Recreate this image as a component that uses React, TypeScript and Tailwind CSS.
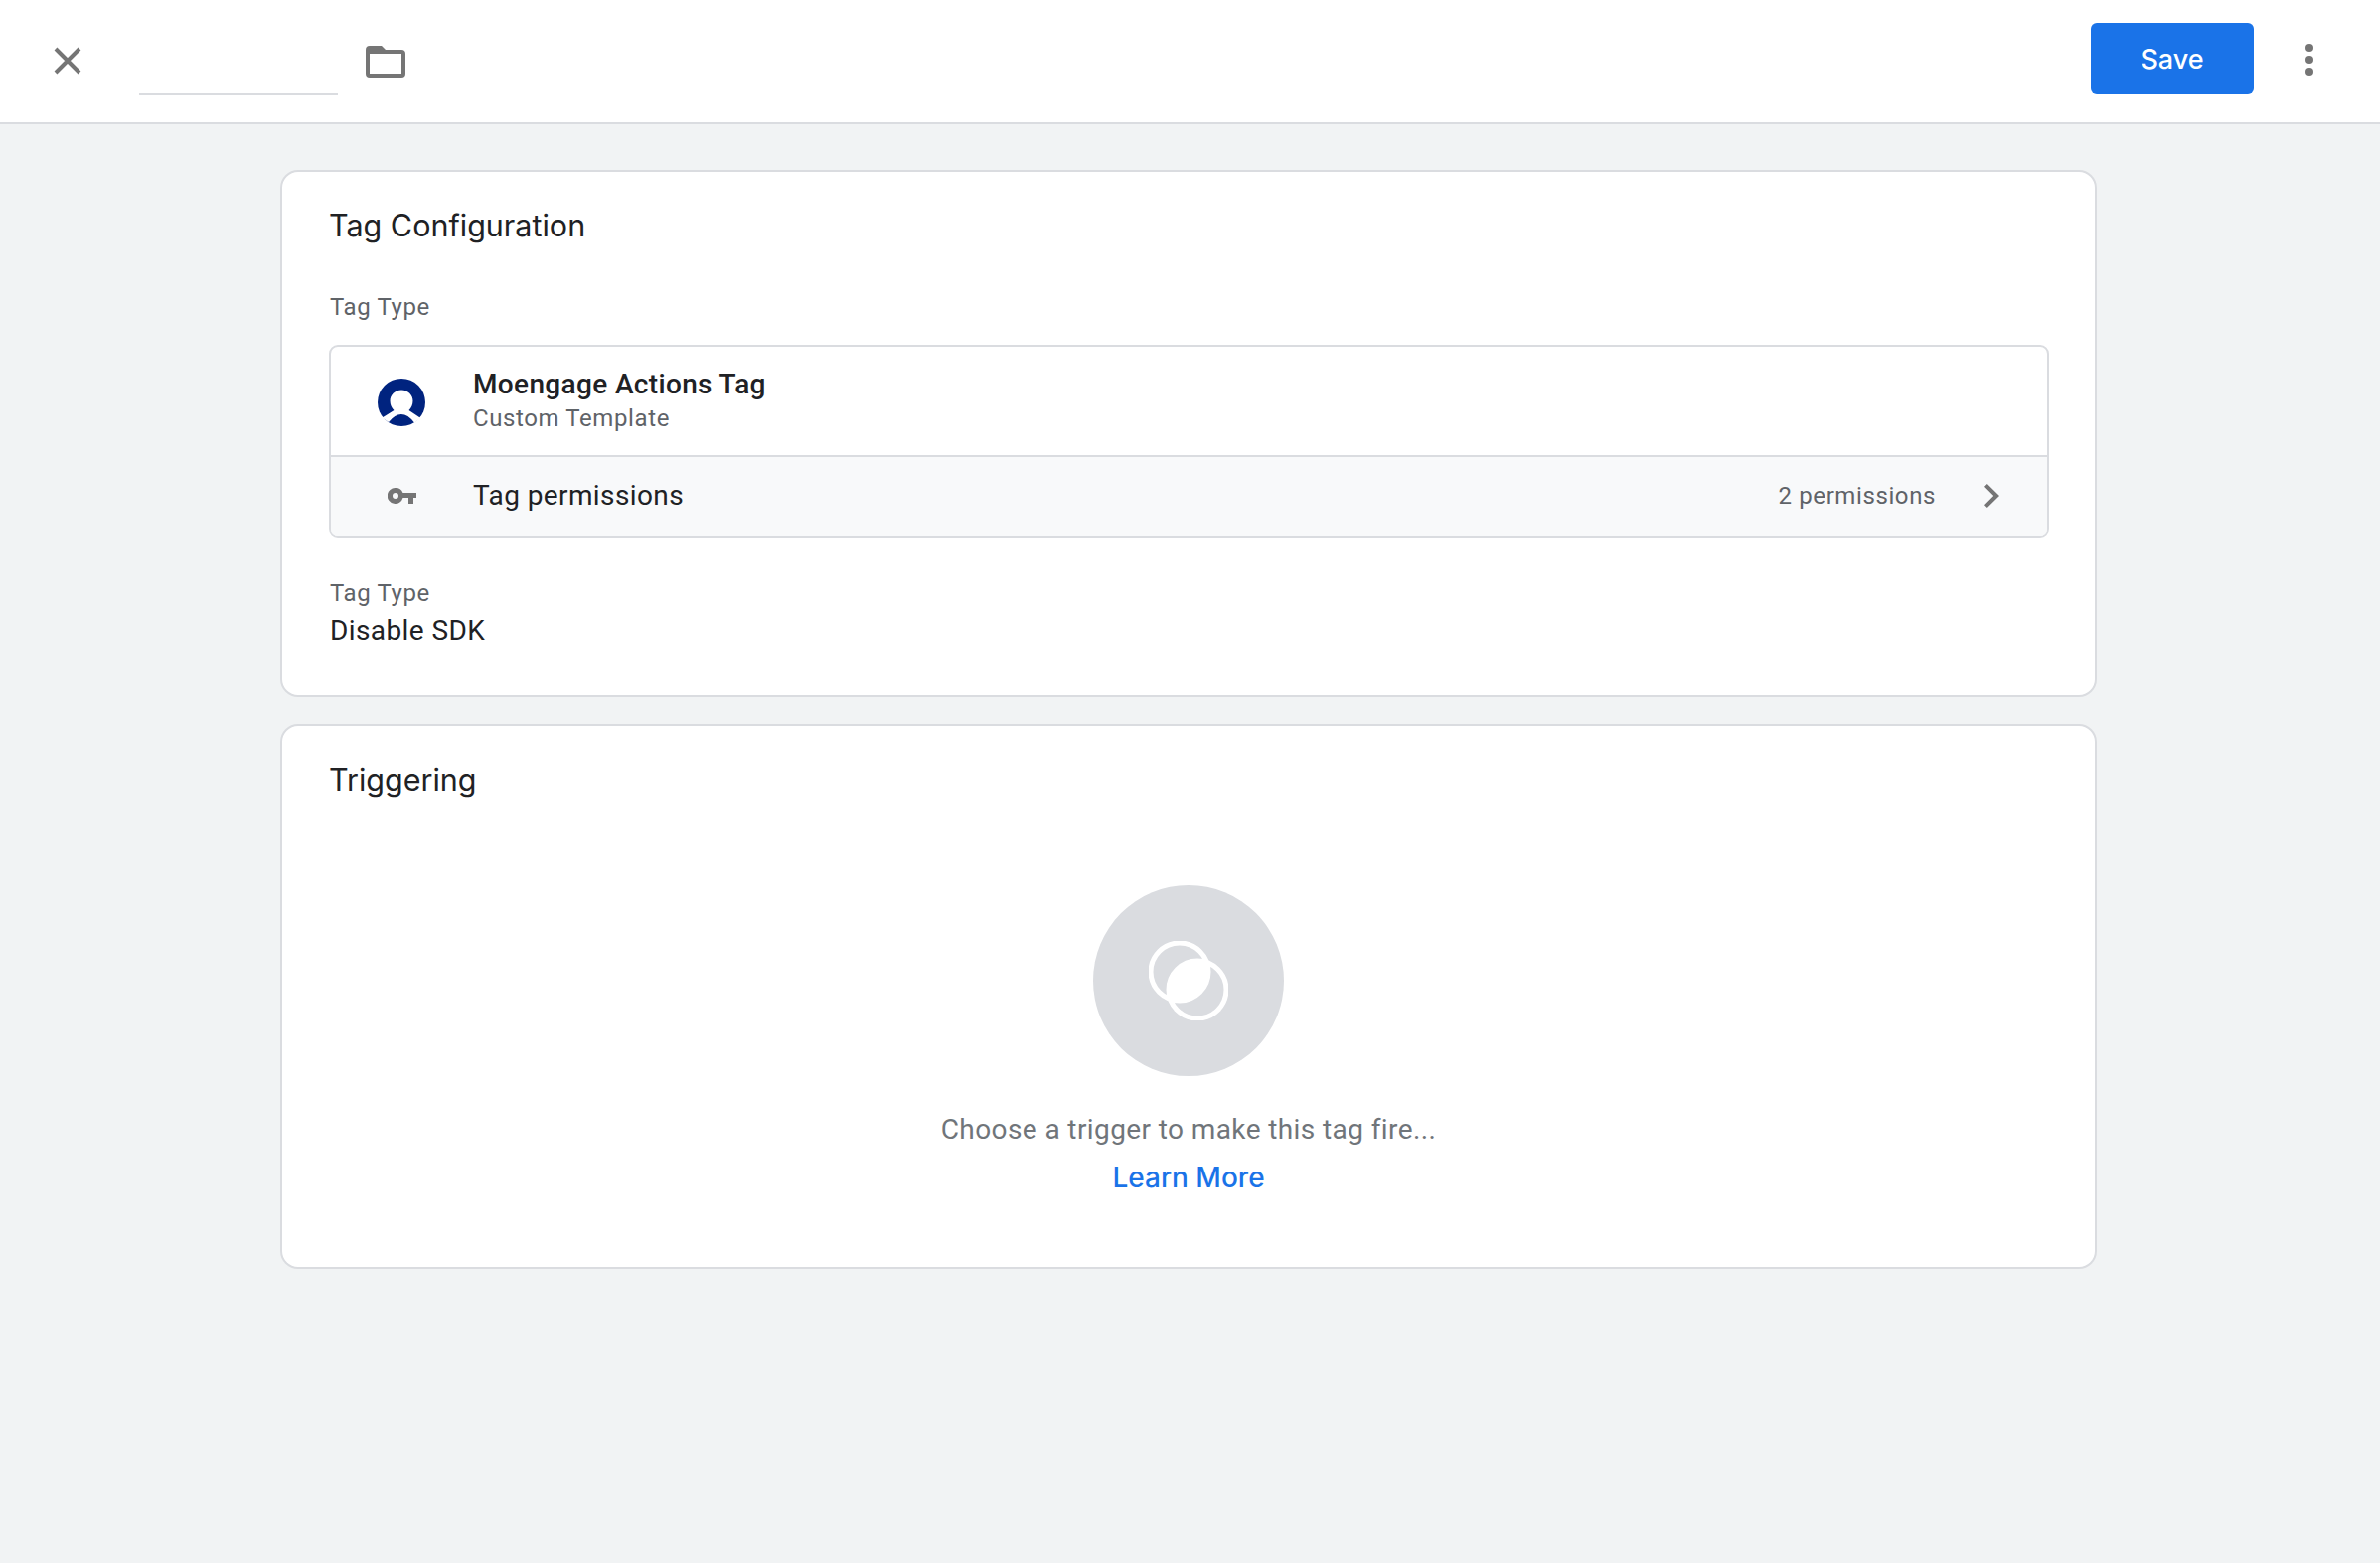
const roboto = "font-['Roboto',sans-serif]";

function Label({ children }: { children: string }) {
  return <div className={`${roboto} text-[24px] leading-[28px] tracking-[0.6px] text-[#5f6368]`}>{children}</div>;
}

function CardTitle({ children }: { children: string }) {
  return <h2 className="-ml-[1px] font-['Inter',sans-serif] text-[30.5px] leading-[36px] text-[#202124]">{children}</h2>;
}

function TagAvatar() {
  return (
    <svg viewBox="0 0 48 48" className="w-12 h-12">
      <circle cx="24" cy="24" r="24" fill="#00237f" />
      <path d="M24 11.5c6.5 0 11.5 5 11.5 11 0 4-1.5 7-4 9.500l12 8-6.500 4.500Q24 28 11 44l-6.500-4.500 12-7.500c-2.500-2.500-4-5.500-4-9.500 0-6 5-11 11.500-11z" fill="#fff" />
    </svg>
  );
}

export default function App() {
  return (
    <div className={`min-h-[1573px] bg-[#f1f3f4] ${roboto}`}>
      <header className="h-[125px] bg-white border-b-2 border-[#dadce0] flex items-center pl-[54px] pr-[67px]">
        <svg viewBox="0 0 28 28" className="w-7 h-7 -mt-[1px]">
          <path d="M2 2 26 26M26 2 2 26" stroke="#757575" strokeWidth="4" fill="none" />
        </svg>
        <div className="ml-[58px] w-[200px] h-[49px] border-b-2 border-[#dadce0] self-end mb-[27px]" />
        <svg viewBox="0 0 40 32" className="ml-[28px] w-10 h-8">
          <path d="M4 0h12l4 4h16a4 4 0 0 1 4 4v20a4 4 0 0 1-4 4H4a4 4 0 0 1-4-4V4a4 4 0 0 1 4-4zm0 8v20h32V8z" fill="#757575" />
        </svg>
        <button className="ml-auto w-[164px] h-[72px] -mt-[5px] pt-[2px] rounded-[6px] bg-[#1a73e8] text-white font-['Inter',sans-serif] font-medium text-[27px]">Save</button>
        <div className="ml-[52px] w-2 flex flex-col gap-1 -mt-[3px]">
          <span className="w-2 h-2 rounded-full bg-[#757575]" />
          <span className="w-2 h-2 rounded-full bg-[#757575]" />
          <span className="w-2 h-2 rounded-full bg-[#757575]" />
        </div>
      </header>

      <main className="w-[1828px] ml-[282px] pt-[46px] flex flex-col gap-[28px]">
        <section className="h-[530px] bg-white border-2 border-[#dadce0] rounded-[18px] px-[48px] pt-[36px]">
          <CardTitle>Tag Configuration</CardTitle>
          <div className="mt-[50px]"><Label>Tag Type</Label></div>
          <div className="mt-[24px] -ml-[1px] -mr-[2px] rounded-[9px] border-2 border-[#dadce0] overflow-hidden">
            <div className="h-[109px] flex items-center">
              <div className="w-[143px] flex justify-center mt-[2px] pr-[2px]"><TagAvatar /></div>
              <div className="flex flex-col gap-[2px]">
                <div className="text-[28px] leading-[32px] font-medium tracking-[0.35px] text-[#202124]">Moengage Actions Tag</div>
                <div className="text-[24px] leading-[32px] tracking-[0.6px] text-[#5f6368]">Custom Template</div>
              </div>
            </div>
            <div className="h-[81px] border-t-2 border-[#dadce0] bg-[#f8f9fa] flex items-center pb-[2px] pr-[48px]">
              <div className="w-[143px] flex justify-center">
                <svg viewBox="0 0 29 16" className="w-[29px] h-4">
                  <path d="M8 0a8 8 0 0 1 7.500 5H29v5h-3v6h-5v-6h-5.500A8 8 0 1 1 8 0zm0 5a3 3 0 1 0 0 6 3 3 0 0 0 0-6z" fill="#757575" />
                </svg>
              </div>
              <span className="text-[28px] tracking-[0.4px] text-[#202124]">Tag permissions</span>
              <span className="ml-auto text-[24px] tracking-[0.6px] text-[#5f6368]">2 permissions</span>
              <svg viewBox="0 0 15 24" className="ml-[49px] w-[15px] h-6">
                <path d="M2.800 0 0 2.800 9.200 12 0 21.200 2.800 24 15 12z" fill="#757575" />
              </svg>
            </div>
          </div>
          <div className="mt-[42px]"><Label>Tag Type</Label></div>
          <div className="mt-[8px] text-[28px] leading-[32px] tracking-[0.4px] text-[#202124]">Disable SDK</div>
        </section>

        <section className="h-[548px] bg-white border-2 border-[#dadce0] rounded-[18px] px-[48px] pt-[36px]">
          <CardTitle>Triggering</CardTitle>
          <div className="mt-[88px] flex flex-col items-center">
            <div className="w-48 h-48 rounded-full bg-[#dadce0] flex items-center justify-center">
              <svg viewBox="0 0 80 80" className="w-20 h-20">
                <defs>
                  <clipPath id="a"><circle cx="31" cy="31" r="29" /></clipPath>
                </defs>
                <circle cx="49" cy="49" r="29" fill="#fff" clipPath="url(#a)" />
                <circle cx="31" cy="31" r="29" fill="none" stroke="#fff" strokeWidth="5" />
                <circle cx="49" cy="49" r="29" fill="none" stroke="#fff" strokeWidth="5" />
              </svg>
            </div>
            <div className="mt-[38px] text-[28px] leading-[32px] tracking-[0.4px] text-[#70757a]">Choose a trigger to make this tag fire...</div>
            <a className="mt-[16px] font-['Inter',sans-serif] font-medium text-[28px] leading-[32px] text-[#1a73e8]">Learn More</a>
          </div>
        </section>
      </main>
    </div>
  );
}
